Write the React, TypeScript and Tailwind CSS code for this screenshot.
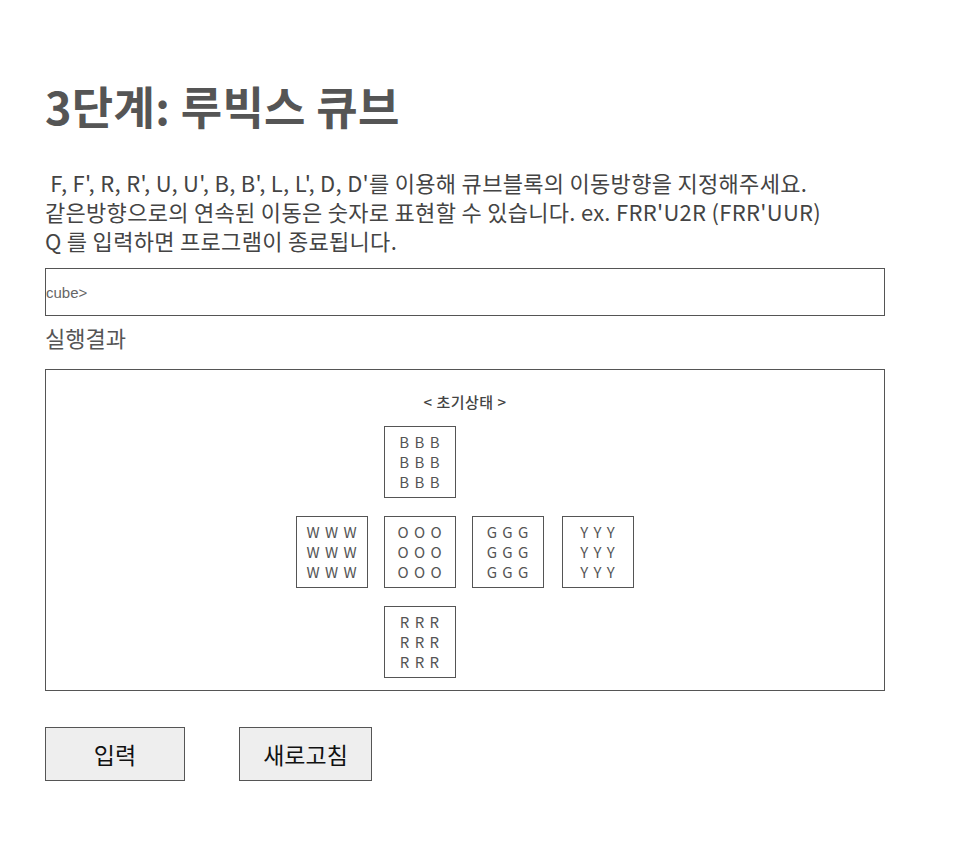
const faces: Record<string, string> = {
  top: 'B',
  left: 'W',
  front: 'O',
  right: 'G',
  back: 'Y',
  bottom: 'R',
};

function Face({ letter }: { letter: string }) {
  return (
    <div className="w-[72px] h-[72px] border border-[#555] flex flex-col items-center justify-center text-[15px] leading-[20px] text-[#555] tracking-[1px]">
      <span>{`${letter} ${letter} ${letter}`}</span>
      <span>{`${letter} ${letter} ${letter}`}</span>
      <span>{`${letter} ${letter} ${letter}`}</span>
    </div>
  );
}

export default function App() {
  return (
    <div className="min-h-[861px] bg-white pl-[45px] pr-[95px] pt-[78px] font-['Noto_Sans_CJK_KR',sans-serif]">
      <h1 className="text-[45px] font-bold text-[#555] tracking-[0.3px] leading-[56px]">3단계: 루빅스 큐브</h1>

      <div className="mt-[34px] text-[22px] leading-[29px] text-[#444] tracking-[0.3px]">
        <p>&nbsp;F, F', R, R', U, U', B, B', L, L', D, D'를 이용해 큐브블록의 이동방향을 지정해주세요.</p>
        <p>같은방향으로의 연속된 이동은 숫자로 표현할 수 있습니다. ex. FRR'U2R (FRR'UUR)</p>
        <p>Q 를 입력하면 프로그램이 종료됩니다.</p>
      </div>

      <input
        type="text"
        placeholder="cube>"
        className="mt-[13px] block w-[840px] h-[48px] border border-[#555] px-0 text-[15px] font-['Liberation_Sans',sans-serif] placeholder:text-[#666] outline-none"
      />

      <h2 className="mt-[5px] text-[22px] leading-[32px] text-[#555]">실행결과</h2>

      <div className="mt-[16px] w-[840px] h-[322px] border border-[#555] pt-[20px] flex flex-col items-center">
        <div className="text-[15px] font-medium text-[#444] leading-[24px] tracking-[0.5px]">&lt; 초기상태 &gt;</div>
        <div className="mt-[12px] grid grid-cols-[72px_72px_72px_72px] gap-x-[16px] gap-y-[18px] -ml-[2px]">
          <div />
          <Face letter={faces.top} />
          <div />
          <div />
          <Face letter={faces.left} />
          <Face letter={faces.front} />
          <Face letter={faces.right} />
          <div className="ml-[2px]">
            <Face letter={faces.back} />
          </div>
          <div />
          <Face letter={faces.bottom} />
        </div>
      </div>

      <div className="mt-[36px] flex gap-[54px]">
        <button className="w-[140px] h-[54px] bg-[#eee] border border-[#555] text-[23px] text-[#111]">입력</button>
        <button className="w-[133px] h-[54px] bg-[#eee] border border-[#555] text-[23px] text-[#111]">새로고침</button>
      </div>
    </div>
  );
}
